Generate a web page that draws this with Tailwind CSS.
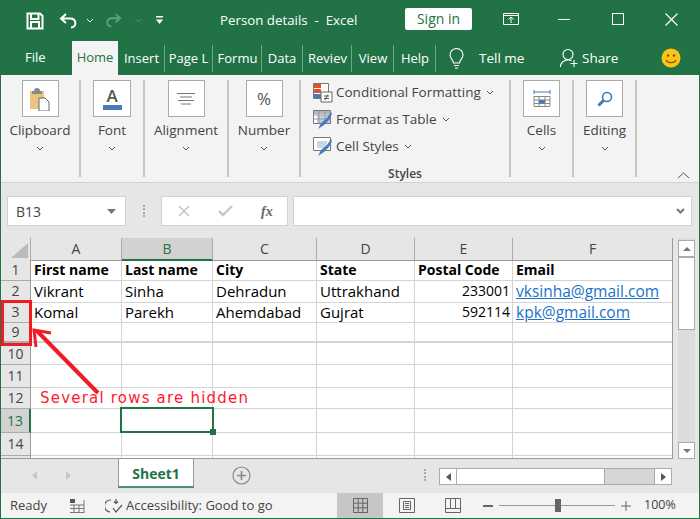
<!DOCTYPE html>
<html lang="en">
<head>
<meta charset="UTF-8">
<title>Person details - Excel</title>
<script src="https://cdn.jsdelivr.net/npm/@tailwindcss/browser@4"></script>
</head>
<body class="m-0">
<div class="relative w-[700px] h-[519px] overflow-hidden bg-[#e6e6e6] border-x border-b border-[#217346] font-['Open_Sans','Noto_Sans',sans-serif] text-[#444]">

  <!-- title bar -->
  <div class="h-[41px] -mx-px bg-[#217346] text-white flex items-center text-[13.3px] relative">
    <svg class="ml-[26px] w-[18px] h-[18px]" viewBox="0 0 18 18" fill="none" stroke="#fff" stroke-width="2"><path d="M1.5 1.5h12.5l2.5 2.500v12.500h-15z"/><path d="M5 2v5h7.500V2M5 16v-6h8v6"/></svg>
    <svg class="ml-[15px] w-[19px] h-[16px]" viewBox="0 0 19 16" fill="none" stroke="#fff" stroke-width="2"><path d="M7 1L2 5.500 7 10M2 5.500h9c7 0 7 9 1 9"/></svg>
    <svg class="ml-[8px] w-[8px] h-[5px]" viewBox="0 0 8 5" fill="none" stroke="#fff"><path d="M1 1l3 3 3-3"/></svg>
    <svg class="ml-[11px] w-[17px] h-[15px]" viewBox="0 0 19 16" fill="none" stroke="#5f9f80" stroke-width="2"><path d="M12 1l5 4.500L12 10M17 5.500H8c-7 0-7 9-1 9"/></svg>
    <svg class="ml-[13px] w-[7px] h-[5px]" viewBox="0 0 8 5" fill="none" stroke="#5f9f80"><path d="M1 1l3 3 3-3"/></svg>
    <svg class="ml-[14px] w-[7px] h-[9px]" viewBox="0 0 7 9" fill="#fff"><path d="M0 0h7v1.500H0zM0 3.500h7L3.500 8z"/></svg>
    <span class="ml-[57px] w-[185px] whitespace-pre">Person details  -  Excel</span>
    <span class="w-[67px] h-[22px] -mt-[3px] bg-white rounded-[2px] text-[#217346] text-center leading-[22px] text-[14px]">Sign in</span>
    <svg class="ml-[31px] -mt-[3px] w-[16px] h-[13px]" viewBox="0 0 16 13" fill="none" stroke="#fff"><path d="M.5.500h15v11H.5zM.5 2.500h15M8 10V4.500M5.500 6.500L8 4l2.500 2.500"/></svg>
    <span class="ml-[39px] -mt-[3px] w-[12px] h-px bg-white"></span>
    <span class="ml-[42px] -mt-[3px] w-[12px] h-[12px] border border-white"></span>
    <svg class="ml-[41px] -mt-[3px] w-[13px] h-[13px]" viewBox="0 0 13 13" stroke="#fff" stroke-width="1.200"><path d="M.5.500l12 12M12.500.500l-12 12"/></svg>
  </div>

  <!-- tabs -->
  <div class="h-[34px] -mx-px bg-[#217346] text-white flex items-center text-[13px]">
    <span class="ml-[25px] w-[47px]">File</span>
    <span class="w-[46px] h-[35px] -mt-px bg-[#f3f3f3] text-[#217346] flex items-center justify-center overflow-hidden">Home</span>
    <span class="w-[47px] pl-px text-center border-r border-[#6fa58a] h-[27px] leading-[27px]">Insert</span>
    <span class="w-[48px] text-center border-r border-[#6fa58a] h-[27px] leading-[27px] overflow-hidden whitespace-nowrap">Page L</span>
    <span class="w-[49px] pl-px text-center border-r border-[#6fa58a] h-[27px] leading-[27px] overflow-hidden whitespace-nowrap">Formu</span>
    <span class="w-[41px] text-center border-r border-[#6fa58a] h-[27px] leading-[27px]">Data</span>
    <span class="w-[49px] pl-px text-center border-r border-[#6fa58a] h-[27px] leading-[27px] overflow-hidden whitespace-nowrap">Reviev</span>
    <span class="w-[42px] pl-px text-center border-r border-[#6fa58a] h-[27px] leading-[27px]">View</span>
    <span class="w-[42px] pl-px text-center border-r border-[#6fa58a] h-[27px] leading-[27px]">Help</span>
    <svg class="ml-[13px] w-[15px] h-[21px]" viewBox="0 0 15 21" fill="none" stroke="#fff" stroke-width="1.100"><path d="M4.500 15c0-3-3.500-4.500-3.500-8a6.500 6.500 0 0 1 13 0c0 3.500-3.500 5-3.500 8zM5 17.500h5M6 20h3"/></svg>
    <span class="ml-[15px] w-[81px] text-[13.5px]">Tell me</span>
    <svg class="w-[18px] h-[20px]" viewBox="0 0 18 20" fill="none" stroke="#fff" stroke-width="1.100"><circle cx="8" cy="6.500" r="5"/><path d="M.5 19c0-4 3-7 7.500-7 1.500 0 2.500.3 3.500.8M14 12v7M10.500 15.500h7"/></svg>
    <span class="ml-[4px] w-[79px] text-[13.5px]">Share</span>
    <svg class="w-[20px] h-[20px]" viewBox="0 0 20 20"><circle cx="10" cy="10" r="9.500" fill="#fcc419"/><circle cx="7" cy="7.500" r="1.300" fill="#7a5a00"/><circle cx="13" cy="7.500" r="1.300" fill="#7a5a00"/><path d="M5 12c1.500 3.500 8.500 3.500 10 0" fill="none" stroke="#7a5a00" stroke-width="1.200"/></svg>
  </div>

  <!-- ribbon -->
  <div class="h-[108px] bg-[#f3f3f3] border-b border-[#d2d2d2] flex text-[13.5px] text-[#444] relative">
    <div class="w-[80px] my-[5px] border-r-2 border-[#c6c6c6] flex flex-col items-center">
      <div class="w-[37px] h-[37px] bg-white border border-[#ababab] flex items-center justify-center">
        <svg class="w-[20px] h-[24px]" viewBox="0 0 20 24"><path d="M0 4h14v18H0z" fill="#eac282"/><path d="M4 4c0-2 1-3 3-3s3 1 3 3h2v3H2V4z" fill="#8a8a8a"/><path d="M9 11h6l4 4v9H9z" fill="#fff" stroke="#666"/></svg>
      </div>
      <span class="mt-[3px] leading-[20px]">Clipboard</span>
      <svg class="mt-[6px] w-[8px] h-[5px]" viewBox="0 0 8 5" fill="none" stroke="#555"><path d="M1 1l3 3 3-3"/></svg>
    </div>
    <div class="w-[64px] my-[5px] border-r-2 border-[#c6c6c6] flex flex-col items-center">
      <div class="w-[38px] h-[37px] bg-white border border-[#ababab] flex flex-col items-center justify-center">
        <span class="text-[17px] leading-[17px] font-semibold text-[#555]">A</span>
        <span class="w-[19px] h-[5px] bg-[#4a7ab8] mt-[1px]"></span>
      </div>
      <span class="mt-[3px] leading-[20px]">Font</span>
      <svg class="mt-[6px] w-[8px] h-[5px]" viewBox="0 0 8 5" fill="none" stroke="#555"><path d="M1 1l3 3 3-3"/></svg>
    </div>
    <div class="w-[84px] my-[5px] border-r-2 border-[#c6c6c6] flex flex-col items-center">
      <div class="w-[37px] h-[37px] bg-white border border-[#ababab] flex items-center justify-center">
        <svg class="w-[18px] h-[12px]" viewBox="0 0 18 12" stroke="#777"><path d="M0 .5h18M3 4h12M1 7.500h16M4 11h10"/></svg>
      </div>
      <span class="mt-[3px] leading-[20px]">Alignment</span>
      <svg class="mt-[6px] w-[8px] h-[5px]" viewBox="0 0 8 5" fill="none" stroke="#555"><path d="M1 1l3 3 3-3"/></svg>
    </div>
    <div class="w-[72px] my-[5px] border-r-2 border-[#c6c6c6] flex flex-col items-center">
      <div class="w-[37px] h-[37px] bg-white border border-[#ababab] flex items-center justify-center text-[17px] text-[#555]">%</div>
      <span class="mt-[3px] leading-[20px]">Number</span>
      <svg class="mt-[6px] w-[8px] h-[5px]" viewBox="0 0 8 5" fill="none" stroke="#555"><path d="M1 1l3 3 3-3"/></svg>
    </div>
    <div class="w-[210px] my-[5px] border-r-2 border-[#c6c6c6] flex flex-col pl-[12px]">
      <div class="h-[27px] -mt-[1px] shrink-0 flex items-center gap-[3px] whitespace-nowrap">
        <svg class="w-[20px] h-[20px] shrink-0" viewBox="0 0 20 20"><path d="M.5.500h15v15H.5z" fill="#fff" stroke="#777"/><path d="M1 1h7v4H1zM1 6h7v4H1z" fill="#d9532c"/><path d="M1 11h7v4H1z" fill="#4a7ab8"/><path d="M8 9h11v10H8z" fill="#fff" stroke="#666"/><path d="M11 13h5M11 15.500h5M15 11.500l-3 5.500" stroke="#555" fill="none"/></svg>
        <span>Conditional Formatting</span>
        <svg class="ml-[2px] w-[8px] h-[5px]" viewBox="0 0 8 5" fill="none" stroke="#555"><path d="M1 1l3 3 3-3"/></svg>
      </div>
      <div class="h-[27px] shrink-0 flex items-center gap-[3px] whitespace-nowrap">
        <svg class="w-[20px] h-[20px] shrink-0" viewBox="0 0 20 20"><path d="M.5.500h17v13H.5z" fill="#fff" stroke="#777"/><path d="M1 1h16v3H1z" fill="#b5b5b5"/><path d="M4 5h13v8H4z" fill="#bcd0e8"/><path d="M.5 5h17M.5 9h17M6 .5v13M12 .5v13" stroke="#999" fill="none"/><path d="M5 19l3-6 6-5 4-6 1 2-3 6-5 5z" fill="#4a7ab8"/></svg>
        <span>Format as Table</span>
        <svg class="ml-[2px] w-[8px] h-[5px]" viewBox="0 0 8 5" fill="none" stroke="#555"><path d="M1 1l3 3 3-3"/></svg>
      </div>
      <div class="h-[27px] shrink-0 flex items-center gap-[3px] whitespace-nowrap">
        <svg class="w-[20px] h-[20px] shrink-0" viewBox="0 0 20 20"><path d="M.5.500h17v13H.5z" fill="#fff" stroke="#777"/><path d="M4 4h10v7H4z" fill="#c8d8ec"/><path d="M5 19l3-6 6-5 4-6 1 2-3 6-5 5z" fill="#4a7ab8"/></svg>
        <span>Cell Styles</span>
        <svg class="ml-[2px] w-[8px] h-[5px]" viewBox="0 0 8 5" fill="none" stroke="#555"><path d="M1 1l3 3 3-3"/></svg>
      </div>
      <span class="mt-[5px] -ml-[12px] shrink-0 text-center text-[12px] leading-[18px] font-semibold">Styles</span>
    </div>
    <div class="w-[63px] my-[5px] border-r-2 border-[#c6c6c6] flex flex-col items-center">
      <div class="w-[37px] h-[37px] bg-white border border-[#ababab] flex items-center justify-center">
        <svg class="w-[18px] h-[20px]" viewBox="0 0 18 20" fill="none" stroke="#888"><path d="M1 1v4M17 1v4M1 3h16" stroke="#4a7ab8"/><path d="M1 7.500h16v10H1zM1 11h16M1 14.500h16M6 7.500v10M12 7.500v10"/><path d="M6 11h6v3.500H6z" fill="#4a7ab8" stroke="none"/></svg>
      </div>
      <span class="mt-[3px] leading-[20px]">Cells</span>
      <svg class="mt-[6px] w-[8px] h-[5px]" viewBox="0 0 8 5" fill="none" stroke="#555"><path d="M1 1l3 3 3-3"/></svg>
    </div>
    <div class="w-[63px] my-[5px] border-r-2 border-[#c6c6c6] flex flex-col items-center">
      <div class="w-[37px] h-[37px] bg-white border border-[#ababab] flex items-center justify-center">
        <svg class="w-[16px] h-[16px]" viewBox="0 0 16 16" fill="none" stroke="#3f78b8"><circle cx="10" cy="6" r="4.500" stroke-width="1.600"/><path d="M6.500 9.500L1.500 14.500" stroke-width="3"/></svg>
      </div>
      <span class="mt-[3px] leading-[20px]">Editing</span>
      <svg class="mt-[6px] w-[8px] h-[5px]" viewBox="0 0 8 5" fill="none" stroke="#555"><path d="M1 1l3 3 3-3"/></svg>
    </div>
    <svg class="absolute right-[9px] top-[97px] w-[13px] h-[7px]" viewBox="0 0 13 7" fill="none" stroke="#555"><path d="M1 6l5.500-5L12 6"/></svg>
  </div>

  <!-- formula bar -->
  <div class="h-[55px] pt-[13px] flex text-[14px]">
    <div class="ml-[6px] w-[119px] h-[30px] bg-white border border-[#d2d2d2] flex items-center justify-between pl-[8px] pr-[9px]">
      <span>B13</span>
      <svg class="w-[9px] h-[5px]" viewBox="0 0 9 5" fill="#777"><path d="M0 0h9L4.500 5z"/></svg>
    </div>
    <div class="ml-[17px] w-[2px] h-[12px] mt-[9px] border-l-2 border-dotted border-[#aaa]"></div>
    <div class="ml-[16px] w-[127px] h-[30px] bg-white border border-[#d2d2d2] flex items-center">
      <svg class="ml-[16px] w-[12px] h-[12px]" viewBox="0 0 12 12" stroke="#c6c6c6" stroke-width="1.600"><path d="M1 1l10 10M11 1L1 11"/></svg>
      <svg class="ml-[28px] w-[15px] h-[12px]" viewBox="0 0 15 12" fill="none" stroke="#c6c6c6" stroke-width="2.400"><path d="M1 6l4 4 9-9"/></svg>
      <span class="ml-[28px] font-['Liberation_Serif',serif] italic font-bold text-[14px] text-[#666]">fx</span>
    </div>
    <div class="ml-[5px] w-[399px] h-[30px] bg-white border border-[#d2d2d2] flex items-center justify-end pr-[6px]">
      <svg class="w-[9px] h-[6px]" viewBox="0 0 9 6" fill="none" stroke="#777" stroke-width="2"><path d="M1 1l3.500 3.500L8 1"/></svg>
    </div>
  </div>

  <!-- sheet -->
  <div class="h-[221px] flex">
    <div id="grid" class="w-[672px] grid grid-cols-[30px_91px_91px_104px_98px_98px_160px] grid-rows-[23px_20px_22px_20px_20px_22px_23px_21px_24px_23px_3px] border-r border-b border-[#9a9a9a] overflow-hidden text-[14px] leading-[18px] text-black"></div>
    <div class="ml-[5px] w-[17px] h-[221px] bg-[#dcdcdc] flex flex-col">
      <div class="mt-[2px] h-[17px] bg-white border border-[#ababab] flex items-center justify-center"><svg class="w-[8px] h-[4px]" viewBox="0 0 8 4" fill="#777"><path d="M4 0l4 4H0z"/></svg></div>
      <div class="h-[73px] bg-white border border-[#ababab]"></div>
      <div class="mt-auto h-[17px] bg-white border border-[#ababab] flex items-center justify-center"><svg class="w-[8px] h-[4px]" viewBox="0 0 8 4" fill="#777"><path d="M0 0h8L4 4z"/></svg></div>
    </div>
  </div>

  <!-- sheet tabs -->
  <div class="h-[34px] flex items-start">
    <svg class="ml-[31px] mt-[12px] w-[5px] h-[9px]" viewBox="0 0 5 9" fill="#c6c6c6"><path d="M5 0v9L0 4.500z"/></svg>
    <svg class="ml-[29px] mt-[12px] w-[5px] h-[9px]" viewBox="0 0 5 9" fill="#c6c6c6"><path d="M0 0v9l5-4.500z"/></svg>
    <div class="ml-[47px] w-[76px] h-[29px] bg-white border-x border-b-2 border-[#217346]/80 border-x-[#9a9a9a] text-[#217346] font-bold text-[14px] text-center leading-[30px]">Sheet1</div>
    <svg class="ml-[38px] mt-[7px] w-[19px] h-[19px]" viewBox="0 0 19 19" fill="none" stroke="#888"><circle cx="9.500" cy="9.500" r="8.500" stroke-width="1.200"/><path d="M5 9.500h9M9.500 5v9" stroke-width="1.600"/></svg>
    <div class="ml-[173px] mt-[10px] w-[2px] h-[12px] border-l-2 border-dotted border-[#aaa]"></div>
    <div class="ml-[13px] mt-[9px] w-[233px] h-[17px] bg-[#d6d6d6] border border-[#ababab] flex">
      <div class="w-[17px] bg-white border-r border-[#ababab] flex items-center justify-center"><svg class="w-[5px] h-[8px]" viewBox="0 0 5 8" fill="#555"><path d="M5 0v8L0 4z"/></svg></div>
      <div class="w-[148px] bg-white border-r border-[#ababab]"></div>
      <div class="ml-auto w-[17px] bg-white border-l border-[#ababab] flex items-center justify-center"><svg class="w-[5px] h-[8px]" viewBox="0 0 5 8" fill="#555"><path d="M0 0v8l5-4z"/></svg></div>
    </div>
  </div>

  <!-- status bar -->
  <div class="h-[25px] bg-[#f3f3f3] flex items-center text-[13px] text-[#444]">
    <span class="ml-[9px] w-[59px]">Ready</span>
    <svg class="w-[16px] h-[16px]" viewBox="0 0 16 16"><path d="M1 1h5v4H1z" fill="#555"/><path d="M1 7h14M5 7v8M10 7v8M1 10.500h14M1 14.500h14M15 2v13" stroke="#777" fill="none"/></svg>
    <svg class="ml-[20px] w-[19px] h-[16px]" viewBox="0 0 19 16" fill="none" stroke="#555" stroke-width="1.200"><path d="M6 2a6 6 0 0 0-1 12M11 1v5M9 3.500l2 2 2-2M8 10l3 4 6-7"/></svg>
    <span class="ml-[2px] w-[211px] whitespace-nowrap">Accessibility: Good to go</span>
    <div class="w-[46px] h-[25px] bg-[#c6c6c6] flex items-center justify-center">
      <svg class="w-[15px] h-[15px]" viewBox="0 0 15 15" fill="none" stroke="#666"><path d="M.5.500h14v14H.5zM.5 5.200h14M.5 9.800h14M5.200.5v14M9.800.5v14"/></svg>
    </div>
    <svg class="ml-[16px] w-[16px] h-[15px]" viewBox="0 0 16 15" fill="none" stroke="#666"><path d="M.5.500h15v14H.5zM4.500 3.500h7v8h-7zM6 5.500h4M6 7.500h4M6 9.500h4"/></svg>
    <svg class="ml-[30px] w-[16px] h-[15px]" viewBox="0 0 16 15" fill="none" stroke="#666"><path d="M.5.500h15v14H.5zM.5 10.500h15M5.500.5v10M10.500.5v10"/></svg>
    <span class="ml-[22px] w-[10px] h-[2px] bg-[#666]"></span>
    <div class="ml-[6px] w-[116px] h-px bg-[#999] relative">
      <span class="absolute left-[56px] -top-[6px] w-[6px] h-[13px] bg-[#666]"></span>
    </div>
    <svg class="ml-[6px] w-[10px] h-[10px]" viewBox="0 0 10 10" stroke="#666"><path d="M0 5h10M5 0v10"/></svg>
    <span class="ml-[13px] text-[12.5px]">100%</span>
  </div>

  <!-- selected cell -->
  <div class="absolute left-[119px] top-[407px] w-[94px] h-[26px] border-2 border-[#217346]">
    <span class="absolute -right-[4px] -bottom-[4px] w-[6px] h-[6px] bg-[#217346]"></span>
  </div>

  <!-- annotation -->
  <div class="absolute left-0 top-[300px] w-[31px] h-[46px] border-[3px] border-[#ee1c25]"></div>
  <svg class="absolute left-[30px] top-[325px] w-[72px] h-[72px]" viewBox="0 0 72 72" fill="none" stroke="#ee1c25"><path d="M67 68L6 6" stroke-width="4"/><path d="M5 22L3 5l17 3" stroke-width="3"/></svg>
  <span class="absolute left-[39px] top-[389px] font-['DejaVu_Sans',sans-serif] text-[15px] tracking-[1.2px] leading-[18px] text-[#ff1a2e] whitespace-nowrap">Several rows are hidden</span>
</div>
<script>
  const cols = ['A', 'B', 'C', 'D', 'E', 'F'];
  const rows = [
    ['1', ['First name', 'Last name', 'City', 'State', 'Postal Code', 'Email']],
    ['2', ['Vikrant', 'Sinha', 'Dehradun', 'Uttrakhand', '233001', 'vksinha@gmail.com']],
    ['3', ['Komal', 'Parekh', 'Ahemdabad', 'Gujrat', '592114', 'kpk@gmail.com']],
    ['9', []], ['10', []], ['11', []], ['12', []], ['13', []], ['14', []], ['', []]
  ];
  let html = '<div class="bg-[#e6e6e6] border-r border-[#ababab] relative"><svg class="absolute right-[2px] bottom-[3px] w-[17px] h-[15px]" viewBox="0 0 17 15" fill="#bbb"><path d="M17 0v15H0z"/></svg></div>';
  cols.forEach(c => {
    html += c === 'B'
      ? '<div class="bg-[#d2d2d2] border-b-2 border-[#217346] border-r border-r-[#ababab] text-[#217346] text-center text-[14px] leading-[21px]">B</div>'
      : '<div class="bg-[#e6e6e6] border-b border-[#9a9a9a] border-r border-r-[#ababab] text-[#444] text-center text-[14px] leading-[21px]">' + c + '</div>';
  });
  rows.forEach(([num, cells], r) => {
    const thick = num === '9' ? 'border-b-2' : 'border-b';
    const lift = r < 3 ? ' pb-[2px]' : '';
    html += num === '13'
      ? '<div class="bg-[#d2d2d2] border-b border-[#ababab] border-r-2 border-r-[#217346] text-[#217346] text-center flex items-center justify-center">13</div>'
      : '<div class="bg-[#e6e6e6] ' + thick + ' border-[#ababab] border-r border-r-[#9a9a9a] text-[#444] text-center flex items-center justify-center overflow-hidden' + lift + '">' + num + '</div>';
    cols.forEach((c, i) => {
      let cls = 'bg-white ' + thick + ' border-[#d4d4d4] border-r pl-[3px] flex items-center whitespace-nowrap' + lift;
      if (r === 0) cls += ' font-bold';
      if (r > 0 && i < 4) cls += ' text-[15px]';
      if (i === 4 && r > 0) cls += ' justify-end pr-[2px]';
      if (i === 5 && r > 0) cls += ' text-[15.5px] text-[#1a73c8] underline';
      html += '<div class="' + cls + '">' + (cells[i] || '') + '</div>';
    });
  });
  document.getElementById('grid').innerHTML = html;
</script>
</body>
</html>
